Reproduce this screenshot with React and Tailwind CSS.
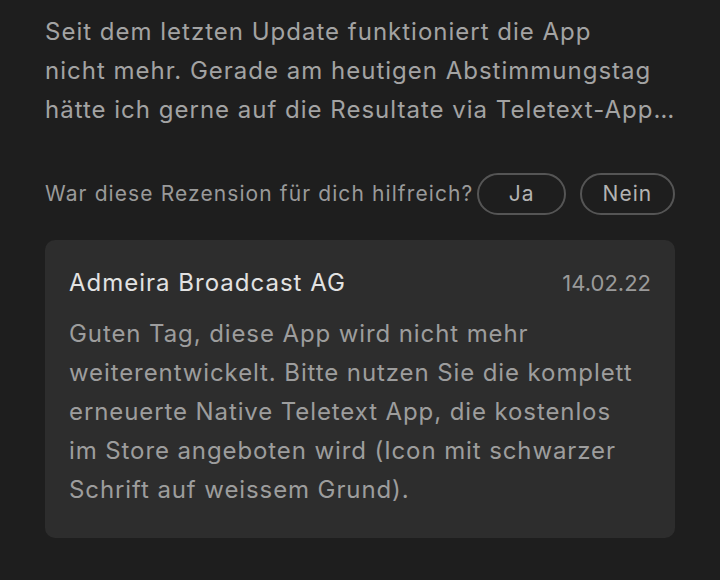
import React from 'react';

const reviewLines = [
  'Seit dem letzten Update funktioniert die App',
  'nicht mehr. Gerade am heutigen Abstimmungstag',
  'hätte ich gerne auf die Resultate via Teletext-App…'
];

const replyLines = [
  'Guten Tag, diese App wird nicht mehr',
  'weiterentwickelt. Bitte nutzen Sie die komplett',
  'erneuerte Native Teletext App, die kostenlos',
  'im Store angeboten wird (Icon mit schwarzer',
  'Schrift auf weissem Grund).'
];

const App = () => {
  return (
    <div
      className="w-[720px] h-[580px] bg-[#1e1e1e] px-[45px] pt-[12px] overflow-hidden"
      style={{ fontFamily: 'Inter, Roboto, sans-serif' }}>
      <div className="text-[24px] leading-[39px] text-[#a3a3a3] tracking-[1px]">
        {reviewLines.map((line) => (
          <div key={line} className="whitespace-nowrap">
            {line}
          </div>
        ))}
      </div>

      <div className="flex items-center mt-[44px]">
        <span className="text-[21px] text-[#9a9a9a] tracking-[1.1px] mr-[4px] whitespace-nowrap">
          War diese Rezension für dich hilfreich?
        </span>
        <button className="w-[89px] h-[42px] rounded-full border-2 border-[#555555] text-[21px] tracking-[1px] text-[#b3b3b3]">
          Ja
        </button>
        <button className="ml-[14px] w-[96px] h-[42px] rounded-full border-2 border-[#555555] text-[21px] tracking-[1px] text-[#b3b3b3]">
          Nein
        </button>
      </div>

      <div className="mt-[25px] bg-[#2d2d2d] rounded-[10px] px-[24px] pt-[28px] pb-[29px]">
        <div className="flex items-center justify-between h-[30px]">
          <span className="text-[24px] text-[#e2e2e2] tracking-[1px] whitespace-nowrap">
            Admeira Broadcast AG
          </span>
          <span className="text-[22px] text-[#9a9a9a]">14.02.22</span>
        </div>
        <div className="mt-[16px] text-[24px] leading-[39px] text-[#9d9d9d] tracking-[0.9px]">
          {replyLines.map((line) => (
            <div key={line} className="whitespace-nowrap">
              {line}
            </div>
          ))}
        </div>
      </div>
    </div>
  );
};

export default App;
